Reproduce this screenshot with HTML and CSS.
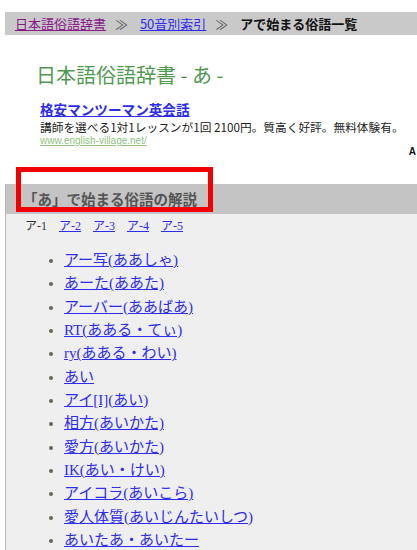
FILE: index.html
```html
<!DOCTYPE html>
<html lang="ja">
<head>
    <meta charset="UTF-8">
    <title>アで始まる俗語一覧 - 日本語俗語辞書</title>
    <link rel="stylesheet" href="styles.css">
</head>
<body>
    <div class="page">
        <div class="crumbs">
            <a class="visited" href="#">日本語俗語辞書</a>
            <span class="sep">≫</span>
            <a href="#">50音別索引</a>
            <span class="sep">≫</span>
            <strong>アで始まる俗語一覧</strong>
        </div>

        <h1 class="site-title">日本語俗語辞書 - あ -</h1>

        <div class="ad">
            <a class="ad-title" href="#">格安マンツーマン英会話</a>
            <div class="ad-text">講師を選べる1対1レッスンが1回 2100円。質高く好評。無料体験有。</div>
            <a class="ad-url" href="#">www.english-village.net/</a>
        </div>
        <div class="ad-mark">A</div>

        <div class="section">
            <h2 class="section-head">
                「あ」で始まる俗語の解説
                <span class="highlight"></span>
            </h2>
            <div class="pager">
                <span class="current">ア-1</span>
                <a href="#">ア-2</a>
                <a href="#">ア-3</a>
                <a href="#">ア-4</a>
                <a href="#">ア-5</a>
            </div>
            <ul class="words">
                <li><a href="#">アー写(ああしゃ)</a></li>
                <li><a href="#">あーた(ああた)</a></li>
                <li><a href="#">アーバー(ああばあ)</a></li>
                <li><a href="#">RT(あある・てぃ)</a></li>
                <li><a href="#">ry(あある・わい)</a></li>
                <li><a href="#">あい</a></li>
                <li><a href="#">アイ[I](あい)</a></li>
                <li><a href="#">相方(あいかた)</a></li>
                <li><a href="#">愛方(あいかた)</a></li>
                <li><a href="#">IK(あい・けい)</a></li>
                <li><a href="#">アイコラ(あいこら)</a></li>
                <li><a href="#">愛人体質(あいじんたいしつ)</a></li>
                <li><a href="#">あいたあ・あいたー</a></li>
            </ul>
        </div>
    </div>
</body>
</html>
```

FILE: styles.css
```css
* {
    box-sizing: border-box;
    margin: 0;
    padding: 0;
}

html, body {
    background: #ffffff;
    overflow: hidden;
}

body {
    font-family: "Noto Sans CJK JP", "Noto Sans", sans-serif;
    color: #111;
}

a {
    color: #2c2cf4;
}

.page {
    margin-left: 5px;
}

/* Breadcrumb bar */
.crumbs {
    margin-top: 12px;
    height: 23px;
    background: #c9c9c9;
    padding-left: 10px;
    font-size: 13px;
    line-height: 23px;
    white-space: nowrap;
}

.crumbs .visited {
    color: #8a1a8a;
}

.crumbs .sep {
    color: #555;
    margin: 0 9px 0 6px;
}

.crumbs strong {
    color: #111;
}

/* Title */
.site-title {
    margin: 28px 0 0 31px;
    font-size: 20px;
    font-weight: normal;
    line-height: 24px;
    color: #4f9a4f;
}

/* Ad block */
.ad {
    margin: 14px 0 0 35px;
}

.ad-title {
    display: block;
    font-size: 13.6px;
    font-weight: bold;
    line-height: 17px;
}

.ad-text {
    font-size: 11.7px;
    line-height: 17px;
    color: #222;
    white-space: nowrap;
}

.ad-url {
    display: block;
    font-family: "Liberation Sans", Arial, sans-serif;
    font-size: 10px;
    line-height: 12px;
    color: #8fc47f;
}

.ad-mark {
    text-align: right;
    padding-right: 1px;
    font-family: "Liberation Sans", Arial, sans-serif;
    font-size: 10px;
    font-weight: bold;
    line-height: 10px;
}

/* Section */
.section {
    margin-top: 27px;
    background: #efefef;
    border-left: 1px solid #b8b8b8;
    padding-bottom: 20px;
}

.section-head {
    position: relative;
    height: 30px;
    background: #c4c4c4;
    padding-left: 17px;
    font-size: 14.5px;
    font-weight: bold;
    line-height: 30px;
    color: #555;
}

.highlight {
    position: absolute;
    left: 10px;
    top: -17px;
    width: 197px;
    height: 45px;
    border: 5px solid #f00000;
}

.pager {
    padding: 5px 0 0 19px;
    font-family: "Liberation Serif", "Noto Sans CJK JP", serif;
    font-size: 12px;
    line-height: 14px;
}

.pager .current {
    color: #333;
    margin-right: 9px;
}

.pager a {
    margin-right: 9px;
}

.words {
    margin-top: 16px;
    padding-left: 58px;
    font-family: "Liberation Serif", "Noto Sans CJK JP", serif;
    font-size: 15px;
    line-height: 23.33px;
}

.words li::marker {
    color: #6a6358;
}
```
